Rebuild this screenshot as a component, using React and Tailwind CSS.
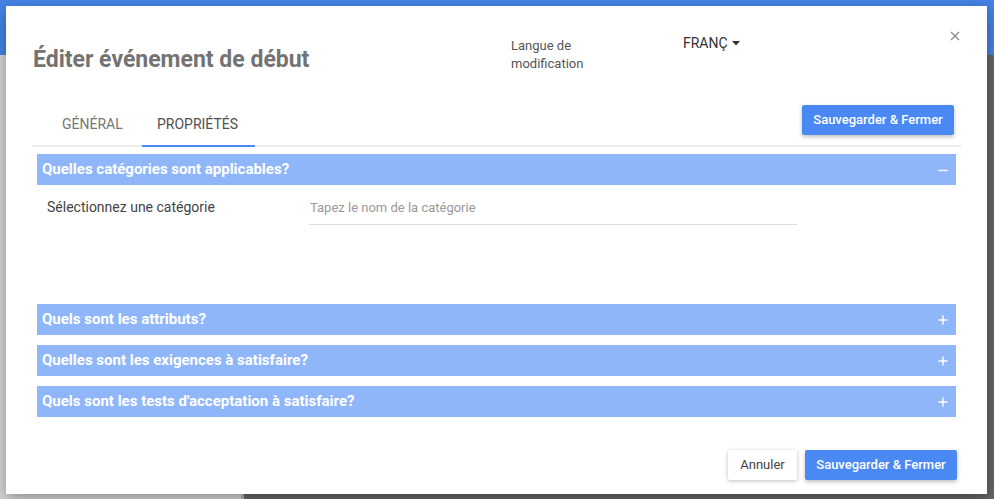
import React from "react";

function Minus() {
  return (
    <svg width="10" height="10" viewBox="0 0 10 10" className="block">
      <path d="M0.5 5.5H9.5" stroke="white" strokeWidth="1.4" />
    </svg>
  );
}
function Plus() {
  return (
    <svg width="10" height="10" viewBox="0 0 10 10" className="block">
      <path d="M0.5 5H9.5M5 0.5V9.5" stroke="white" strokeWidth="1.4" />
    </svg>
  );
}

function SectionHeader({ title, open }) {
  return (
    <div className="flex h-[31px] items-center justify-between bg-[#8fb6f8] pl-[5px] pr-[8px]">
      <span className="text-[15px] font-bold text-white">{title}</span>
      {open ? <Minus /> : <Plus />}
    </div>
  );
}

export default function App() {
  return (
    <div
      className="relative h-[499px] w-[994px] overflow-hidden"
      style={{ fontFamily: "Roboto, 'Liberation Sans', sans-serif" }}
    >
      {/* background page */}
      <div className="flex h-full flex-col">
        <div className="h-[55px] bg-[#4584e8]" />
        <div className="flex flex-1">
          <div className="w-[241px] bg-[#d6d6d6]" />
          <div className="w-[3px] bg-[#a9b6c8]" />
          <div className="flex-1 bg-[#666666]" />
        </div>
      </div>

      {/* dialog */}
      <div className="absolute left-[6px] top-[6px] flex h-[488px] w-[981px] flex-col bg-white px-[26px] shadow-[0_4px_14px_rgba(0,0,0,0.35)]">
        <button className="absolute right-[27px] top-[25px] p-0">
          <svg width="10" height="10" viewBox="0 0 10 10" className="block">
            <path d="M1 1L9 9M9 1L1 9" stroke="#8a8a8a" strokeWidth="1.3" />
          </svg>
        </button>

        {/* header */}
        <div className="flex h-[97px] items-start">
          <h1 className="ml-[1px] mt-[41px] w-[478px] text-[23px] font-bold leading-[26px] text-[#737373]">
            Éditer événement de début
          </h1>
          <div className="mt-[31px] w-[172px] text-[13px] leading-[18px] text-[#555]">
            Langue de
            <br />
            modification
          </div>
          <div className="mt-[28px] flex items-center text-[14px] leading-[18px] text-[#333]">
            FRANÇ
            <svg width="8" height="5" viewBox="0 0 8 5" className="ml-[4px] block">
              <path d="M0 0H8L4 4.5Z" fill="#333" />
            </svg>
          </div>
        </div>

        {/* tabs row */}
        <div className="flex items-end justify-between border-b-2 border-[#ececec]">
          <div className="flex">
            <div className="-mb-[2px] flex h-[44px] w-[110px] items-center border-b-2 border-transparent pl-[30px] text-[14px] text-[#757575]">
              GÉNÉRAL
            </div>
            <div className="-mb-[2px] flex h-[44px] w-[113px] items-center border-b-2 border-[#4a89f4] pl-[15px] text-[14px] text-[#505050]">
              PROPRIÉTÉS
            </div>
          </div>
          <button className="mb-[10px] mr-[7px] h-[30px] w-[152px] rounded-[2px] bg-[#4a89f4] text-[13px] font-medium text-white shadow-[0_2px_4px_rgba(0,0,0,0.25)]">
            Sauvegarder &amp; Fermer
          </button>
        </div>

        {/* accordions */}
        <div className="mx-[5px] mt-[7px] flex flex-col">
          <SectionHeader title="Quelles catégories sont applicables?" open />
          <div className="flex h-[119px] items-start">
            <div className="mt-[14px] w-[272px] pl-[10px] text-[14px] leading-[16px] text-[#444]">
              Sélectionnez une catégorie
            </div>
            <div className="mt-[15px] h-[25px] w-[488px] border-b border-[#dcdcdc] pl-[1px] text-[13px] leading-[16px] text-[#9a9a9a]">
              Tapez le nom de la catégorie
            </div>
          </div>
          <div className="flex flex-col gap-[10px]">
            <SectionHeader title="Quels sont les attributs?" />
            <SectionHeader title="Quelles sont les exigences à satisfaire?" />
            <SectionHeader title="Quels sont les tests d'acceptation à satisfaire?" />
          </div>
        </div>

        {/* footer */}
        <div className="mt-[33px] flex justify-end gap-[8px] pr-[4px]">
          <button className="h-[30px] w-[69px] rounded-[2px] bg-white text-[13px] text-[#444] shadow-[0_1px_4px_rgba(0,0,0,0.25)]">
            Annuler
          </button>
          <button className="h-[30px] w-[152px] rounded-[2px] bg-[#4a89f4] text-[13px] font-medium text-white shadow-[0_2px_4px_rgba(0,0,0,0.25)]">
            Sauvegarder &amp; Fermer
          </button>
        </div>
      </div>
    </div>
  );
}
